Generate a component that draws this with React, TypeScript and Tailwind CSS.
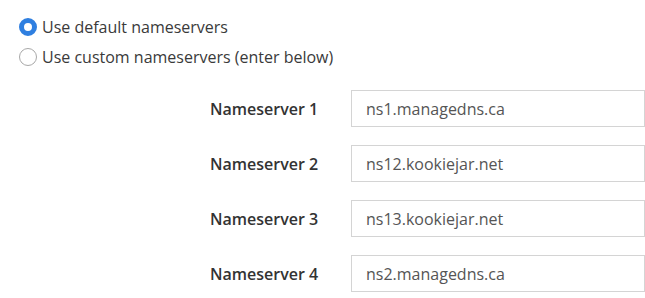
import { useState } from "react";

const servers = [
  "ns1.managedns.ca",
  "ns12.kookiejar.net",
  "ns13.kookiejar.net",
  "ns2.managedns.ca",
];

function Radio({ checked }: { checked: boolean }) {
  return checked ? (
    <span className="w-[18px] h-[18px] rounded-full border-[5px] border-[#2f7fe0] bg-white shrink-0" />
  ) : (
    <span className="w-[18px] h-[18px] rounded-full border border-[#a8a8a8] bg-white shrink-0" />
  );
}

export default function App() {
  const [mode, setMode] = useState("default");

  return (
    <main
      className="w-[645px] h-[298px] overflow-hidden bg-white text-[#3a3a3a] text-[16px]"
      style={{ fontFamily: '"Open Sans", "Liberation Sans", sans-serif' }}
    >
      <div className="pt-[12px] pl-[19px] flex flex-col">
        <label className="flex items-center gap-[5px] h-[30px] cursor-pointer" onClick={() => setMode("default")}>
          <Radio checked={mode === "default"} />
          <span>Use default nameservers</span>
        </label>
        <label className="flex items-center gap-[5px] h-[30px] cursor-pointer" onClick={() => setMode("custom")}>
          <Radio checked={mode === "custom"} />
          <span>Use custom nameservers (enter below)</span>
        </label>
      </div>

      <div className="mt-[18px] pl-[210px] flex flex-col gap-[18px]">
        {servers.map((s, i) => (
          <div key={s} className="flex items-center">
            <div className="w-[141px] shrink-0 font-semibold text-[#333]">Nameserver {i + 1}</div>
            <input
              defaultValue={s}
              className="w-[320px] h-[37px] border border-[#d4d4d4] px-[14px] text-[#555] outline-none"
            />
          </div>
        ))}
      </div>
    </main>
  );
}
